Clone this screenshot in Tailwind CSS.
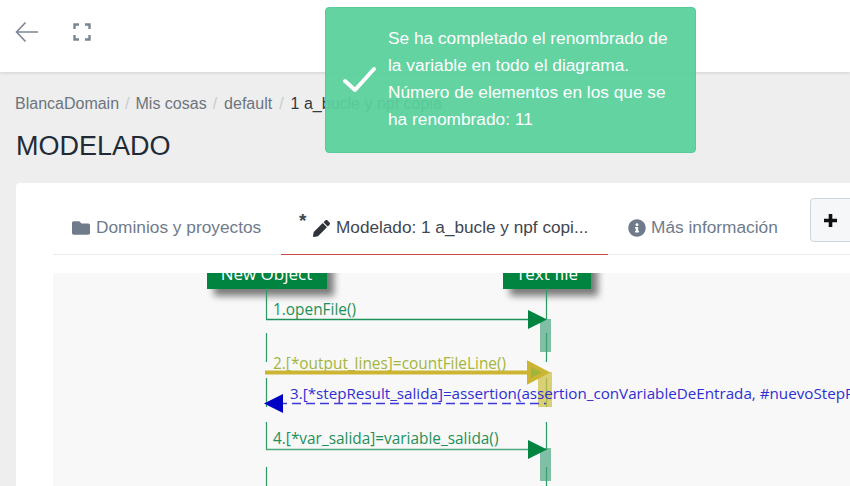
<!DOCTYPE html>
<html lang="es">
<head>
  <meta charset="UTF-8">
  <title>Modelado</title>
  <script src="https://cdn.jsdelivr.net/npm/@tailwindcss/browser@4"></script>
</head>
<body class="relative h-[486px] w-[850px] overflow-hidden bg-[#eeeeee] font-['Liberation_Sans',sans-serif]">
  <!-- barra superior -->
  <header class="flex h-[72px] items-center gap-[34px] bg-white pb-[8px] pl-[15px] shadow-[0_1px_3px_rgba(0,0,0,0.12)]">
    <svg class="h-[24px] w-[24px]" viewBox="0 0 24 24" fill="none" stroke="#7a8594" stroke-width="1.6"><path d="M23 12H1.500M10.500 2.500 1.500 12l9 9.500"/></svg>
    <svg class="h-[18px] w-[18px]" viewBox="0 0 18 18" fill="none" stroke="#7a8594" stroke-width="2.4"><path d="M1.500 6V1.500H6M12 1.500h4.500V6M16.500 12v4.500H12M6 16.500H1.500V12"/></svg>
  </header>

  <main class="pl-[16px]">
    <nav class="ml-[-1px] mt-[22px] flex h-[20px] items-center text-[16px] text-[#6c757d]">
      <span>BlancaDomain</span><span class="px-[6px] text-[#c6cbd0]">/</span>
      <span>Mis cosas</span><span class="pl-[6px] pr-[7px] text-[#c6cbd0]">/</span>
      <span>default</span><span class="px-[7px] text-[#c6cbd0]">/</span>
      <span class="text-[#343a40]">1 a_bucle y npf copia</span>
    </nav>
    <h1 class="mt-[16px] text-[27px] leading-[32px] text-[#212b36]">MODELADO</h1>

    <section class="mt-[21px] h-[303px] rounded-tl-[4px] bg-white pl-[37px]">
      <!-- pestañas -->
      <div class="flex h-[72px] items-start">
        <div class="flex h-[72px] w-[228px] items-center gap-[6px] border-b border-b-[#e9ecef] pl-[19px] pt-[19px] text-[17.300px] text-[#6f7b8a]">
          <svg class="h-[18px] w-[18px]" viewBox="0 0 512 512" fill="#6f7b8a"><path d="M464 128H272l-64-64H48C21.490 64 0 85.490 0 112v288c0 26.510 21.490 48 48 48h416c26.510 0 48-21.490 48-48V176c0-26.510-21.490-48-48-48z"/></svg>
          <span class="whitespace-nowrap">Dominios y proyectos</span>
        </div>
        <div class="relative flex h-[72px] w-[327px] items-center gap-[6px] border-b border-b-[#c8474a] pl-[32px] pt-[19px] text-[17.200px] text-[#3f4650]">
          <span class="absolute left-[18px] top-[28px] text-[19px] font-bold leading-none text-[#3f4650]">*</span>
          <svg class="h-[17px] w-[17px]" viewBox="0 0 512 512" fill="#2f343a"><path d="M497.900 142.100l-46.100 46.100c-4.700 4.700-12.300 4.700-17 0l-111-111c-4.700-4.700-4.700-12.300 0-17l46.100-46.100c18.700-18.700 49.100-18.700 67.900 0l60.100 60.100c18.800 18.700 18.800 49.100 0 67.900zM284.200 99.800L21.600 362.400.4 483.900c-2.900 16.400 11.400 30.600 27.800 27.800l121.500-21.300 262.600-262.600c4.700-4.700 4.700-12.300 0-17l-111-111c-4.800-4.700-12.400-4.700-17.100 0z"/></svg>
          <span class="whitespace-nowrap">Modelado: 1 a_bucle y npf copi...</span>
        </div>
        <div class="flex h-[72px] w-[242px] items-center border-b border-b-[#e9ecef] pl-[20px] pt-[19px] text-[17.300px] text-[#6f7b8a]">
          <svg class="mr-[5px] h-[18px] w-[18px] shrink-0" viewBox="0 0 512 512" fill="#6f7b8a"><path d="M256 8C119.043 8 8 119.083 8 256c0 136.997 111.043 248 248 248s248-111.003 248-248C504 119.083 392.957 8 256 8zm0 110c23.196 0 42 18.804 42 42s-18.804 42-42 42-42-18.804-42-42 18.804-42 42-42zm56 254c0 6.627-5.373 12-12 12h-88c-6.627 0-12-5.373-12-12v-24c0-6.627 5.373-12 12-12h12v-64h-12c-6.627 0-12-5.373-12-12v-24c0-6.627 5.373-12 12-12h64c6.627 0 12 5.373 12 12v100h12c6.627 0 12 5.373 12 12v24z"/></svg>
          <span class="whitespace-nowrap">Más información</span>
          <span class="ml-[32px] mt-[-16px] flex h-[44px] w-[50px] shrink-0 items-center justify-center rounded-l-[4px] border border-[#ced4da] bg-[#f6f7f8]">
            <svg class="mr-[8px] h-[15px] w-[15px]" viewBox="0 0 15 15" fill="#111"><path d="M5.700 1h3.600v4.700H14v3.600H9.300V14H5.700V9.300H1V5.700h4.700z"/></svg>
          </span>
        </div>
      </div>

      <!-- diagrama de secuencia -->
      <svg class="mt-[18px] block bg-[#f8f8f8]" width="797" height="213" viewBox="53 273 797 213" font-family="'Open Sans', sans-serif" font-size="15.400">
        <defs>
          <filter id="sombra" x="-30%" y="-30%" width="160%" height="190%"><feGaussianBlur stdDeviation="3.500"/></filter>
        </defs>
        <rect x="214" y="262" width="120" height="34" fill="#000" opacity=".5" filter="url(#sombra)"/>
        <rect x="510" y="262" width="88" height="34" fill="#000" opacity=".5" filter="url(#sombra)"/>
        <rect x="207" y="262" width="120" height="27" fill="#00843f"/>
        <rect x="503" y="262" width="88" height="27" fill="#00843f"/>
        <text x="266.500" y="280" fill="#fff" text-anchor="middle" font-size="17">New Object</text>
        <text x="547" y="280" fill="#fff" text-anchor="middle" font-size="17">Text file</text>

        <g stroke="#2b9a63" stroke-width="1.200">
          <path d="M266.500 289v30M266.500 333v29M266.500 378v29M266.500 422v28M266.500 467v19"/>
          <path d="M546.500 289v30M546.500 333v29M546.500 378v29M546.500 422v28M546.500 467v19"/>
        </g>
        <rect x="540" y="319" width="11" height="33" fill="#3f9f78" opacity=".65"/>
        <rect x="540" y="448" width="11" height="33" fill="#3f9f78" opacity=".65"/>

        <text x="273" y="315" fill="#1f9058">1.openFile()</text>
        <path d="M266 319.500h264" stroke="#1f9058" stroke-width="1.300"/>
        <path d="M528 310l19 9.500-19 9.500z" fill="#00843f"/>

        <rect x="538" y="372" width="14" height="35" fill="#cfc34a" opacity=".75"/>
        <text x="273" y="369" fill="#a3b53a">2.[*output_lines]=countFileLine()</text>
        <path d="M265 372.500h268" stroke="#cdb534" stroke-width="4"/>
        <path d="M529 363.500l17 9-17 9z" fill="#9fb63a" stroke="#cdb534" stroke-width="4"/>

        <text x="290" y="399" fill="#2f2fd2" font-size="15.200">3.[*stepResult_salida]=assertion(assertion_conVariableDeEntrada, #nuevoStepResult)</text>
        <path d="M278 403.500h268" stroke="#3a3ad6" stroke-width="1.400" stroke-dasharray="9 5"/>
        <path d="M283 394v19l-19-9.500z" fill="#0000c4"/>

        <text x="273" y="444" fill="#1f9058">4.[*var_salida]=variable_salida()</text>
        <path d="M266 449.500h264" stroke="#4caa7c" stroke-width="1.300"/>
        <path d="M528 440l19 9.500-19 9.500z" fill="#00843f"/>
      </svg>
    </section>
  </main>

  <!-- aviso -->
  <div class="absolute left-[325px] top-[7px] flex h-[146px] w-[371px] items-center rounded-[4px] border border-[#55cb97] bg-[#5bd19d]/95 text-white">
    <svg class="ml-[16px] h-[30px] w-[35px] shrink-0" viewBox="0 0 35 30" fill="none" stroke="#fff" stroke-width="4" stroke-linecap="round" stroke-linejoin="round"><path d="M3 16l10 9L32 4"/></svg>
    <p class="ml-[11px] mt-[-2px] w-[285px] text-[17.300px] leading-[27px]">Se ha completado el renombrado de la variable en todo el diagrama. Número de elementos en los que se ha renombrado: 11</p>
  </div>
</body>
</html>
